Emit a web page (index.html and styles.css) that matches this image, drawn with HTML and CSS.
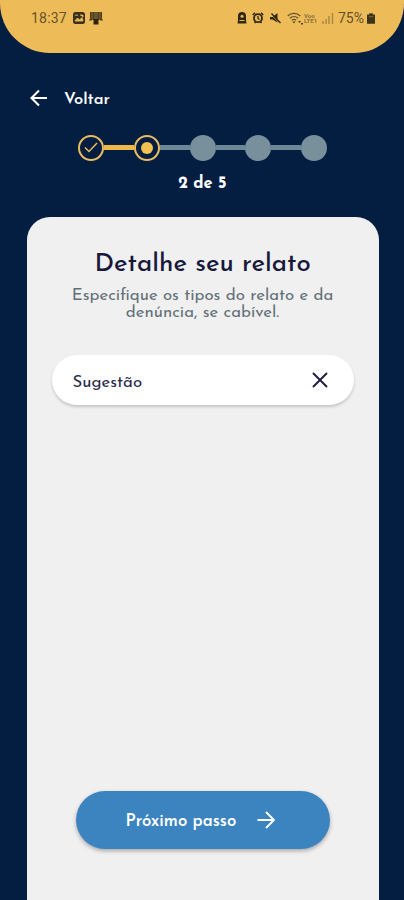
FILE: index.html
```html
<!DOCTYPE html>
<html lang="pt-BR">
<head>
<meta charset="utf-8">
<title>Detalhe seu relato</title>
<link rel="stylesheet" href="styles.css">
</head>
<body>
<header class="status">
  <div class="status-left">
    <span class="clock">18:37</span>
    <svg width="12" height="12" viewBox="0 0 12 12"><rect width="12" height="12" rx="2.5" fill="#3b3019"/><path d="M2 3.2h3M7 3h3v2M2 9l2.5-3 2 2L9 5.500l1 3.500z" fill="#e9b956" stroke="#e9b956" stroke-width=".9"/></svg>
    <svg width="14" height="14" viewBox="0 0 14 14"><path d="M2 1h10v8H2z" fill="#6b5529"/><path d="M1.500 1v8M12.500 1v8M4.500 1v8M9.500 1v8M0 9h3M11 9h3" stroke="#4d3e20" stroke-width="1.100"/><path d="M4.500 8h5v5.500h-5z" fill="#30240f"/></svg>
  </div>
  <div class="status-right">
    <svg class="i1" width="10" height="12" viewBox="0 0 10 12"><path d="M1 4a4 4 0 0 1 8 0v4l.5 3.500H.5L1 8z" fill="#30270f"/><circle cx="5" cy="4.300" r="1.500" fill="#e9b956"/><path d="M2.500 8.500h5" stroke="#e9b956"/></svg>
    <svg class="i2" width="12" height="12" viewBox="0 0 12 12"><path d="M.8 3 3 .9M11.200 3 9 .9M2.500 11l1-1M9.500 11l-1-1" stroke="#30270f" stroke-width="1.600"/><circle cx="6" cy="6.200" r="4" fill="#e9b956" stroke="#30270f" stroke-width="1.800"/><path d="M6 4v2.500l1.500 1" fill="none" stroke="#30270f" stroke-width="1.200"/></svg>
    <svg class="i3" width="12" height="12" viewBox="0 0 12 12"><path d="M1 5h2.500L8.500 1v9.500L3.500 7.500H1z" fill="#30270f"/><path d="m1 1.500 10 10" stroke="#e9b956" stroke-width="1"/><path d="m2.500 1.500 9 9.500" stroke="#30270f" stroke-width="1.400"/></svg>
    <svg class="i4" width="17" height="13" viewBox="0 0 17 13"><g fill="none" stroke="#65532d" stroke-width="1.200"><path d="M.7 4a9 9 0 0 1 12.600 0M2.800 6.200a6 6 0 0 1 8.400 0M4.800 8.300a3.300 3.300 0 0 1 4.400 0"/></g><path d="m5.500 9.500 1.500 2 1.500-2zM11 9l1.500 2L14 9zM14 11h2v1.500h-2z" fill="#4d3e20"/></svg>
    <span class="volte"><span>Voo</span><span>LTE1</span></span>
    <svg class="i5" width="12" height="12" viewBox="0 0 12 12"><path d="M1 9v3M4 7v5M7 4v8M10.500 1v11" stroke="#a98745" stroke-width="1.400"/></svg>
    <span class="battery">75%</span>
    <svg width="8" height="11" viewBox="0 0 9 12"><path d="M2.500 0h4v1.500H9V12H0V1.500h2.500z" fill="#3d321a"/><path d="M2 4h5" stroke="#8b713a"/></svg>
  </div>
</header>

<nav class="back">
  <svg width="18" height="18" viewBox="0 0 18 18"><path d="M17 9H1.500M9 1.500 1.500 9 9 16.500" fill="none" stroke="#fff" stroke-width="2.100"/></svg>
  <span class="back-label">Voltar</span>
</nav>

<div class="steps">
  <span class="dot ring"><svg width="14" height="11" viewBox="0 0 14 11"><path d="m1 5.500 4 4L13 1" fill="none" stroke="#e9bd62" stroke-width="1.500"/></svg></span>
  <span class="line active"></span>
  <span class="dot ring"><span class="core"></span></span>
  <span class="line"></span>
  <span class="dot"></span>
  <span class="line"></span>
  <span class="dot"></span>
  <span class="line"></span>
  <span class="dot"></span>
</div>
<p class="count">2 de 5</p>

<main class="card">
  <h1>Detalhe seu relato</h1>
  <p class="hint">Especifique os tipos do relato e da<br>denúncia, se cabível.</p>
  <div class="field">
    <span class="field-label">Sugestão</span>
    <svg width="16" height="16" viewBox="0 0 16 16"><path d="m1 1 14 14M15 1 1 15" stroke="#1c1d3d" stroke-width="1.900"/></svg>
  </div>
  <button class="next">
    <span class="next-label">Próximo passo</span>
    <svg width="18" height="18" viewBox="0 0 18 18"><path d="M.5 9H16.500M9 1l8 8-8 8" fill="none" stroke="#fff" stroke-width="1.900"/></svg>
  </button>
</main>
</body>
</html>
```
FILE: styles.css
```css
* { box-sizing: border-box; }
body {
  margin: 0;
  height: 900px;
  overflow: hidden;
  display: flex;
  flex-direction: column;
  background: #041e42;
  font-family: "Josefin Sans", Lato, sans-serif;
  color: #fff;
}
svg { display: block; flex: none; }
.status {
  height: 53px;
  flex: none;
  padding: 8px 29px 0 31px;
  display: flex;
  justify-content: space-between;
  background: #edbc58;
  border-radius: 0 0 50px 50px;
  font-family: Roboto, sans-serif;
  font-size: 14px;
  line-height: 20px;
  color: #66522a;
}
.status-left, .status-right { display: flex; align-items: center; height: 20px; }
.clock { width: 42px; letter-spacing: .2px; }
.status-left svg + svg { margin-left: 4px; }
.i1 { margin-right: 5px; }
.i2 { margin-right: 5px; }
.i3 { margin-right: 6px; }
.volte {
  display: flex;
  flex-direction: column;
  width: 15px;
  margin-right: 3px;
  font-size: 6px;
  line-height: 5.500px;
  font-weight: 700;
  color: #8b7040;
}
.i5 { margin-right: 4px; }
.battery { width: 29px; }
.back {
  display: flex;
  align-items: center;
  height: 24px;
  margin: 33px 0 0 30px;
  gap: 16px;
  padding-bottom: 1px;
}
.back-label { font-size: 16.5px; font-weight: 600; line-height: 24px; padding-top: 5px; }
.steps {
  display: flex;
  align-items: center;
  height: 27px;
  margin: 24px 77px 0 78px;
}
.dot {
  width: 26px;
  height: 26px;
  flex: none;
  border-radius: 50%;
  background: #78909c;
  display: flex;
  align-items: center;
  justify-content: center;
}
.ring { background: transparent; border: 2px solid #e9bd62; }
.core { width: 12px; height: 12px; border-radius: 50%; background: #f3c052; }
.line { flex: 1; height: 5px; background: #6c8797; }
.line.active { background: #edb949; }
.count { margin: 11px 0 0; padding-left: 1px; text-align: center; font-size: 16.5px; font-weight: 700; line-height: 24px; }
.card {
  flex: 1;
  margin: 21px 25.500px 0 26.500px;
  padding: 32px 25px 0;
  border-radius: 23px 23px 0 0;
  background: #f0f0f0;
  display: flex;
  flex-direction: column;
  align-items: center;
}
h1 { margin: 0; font-size: 25.8px; line-height: 32px; font-weight: 500; color: #17183b; white-space: nowrap; }
.hint { margin: 6px 0 0; text-align: center; font-size: 16.8px; line-height: 17px; color: #637078; white-space: nowrap; }
.field {
  align-self: stretch;
  height: 50px;
  margin-top: 34px;
  padding: 0 26px 0 21px;
  display: flex;
  align-items: center;
  justify-content: space-between;
  border-radius: 25px;
  background: #fff;
  box-shadow: 0 2px 3px rgba(0, 0, 0, .18);
}
.field-label { font-size: 16.8px; color: #292a4b; padding-top: 4px; }
.next {
  width: 254px;
  height: 58px;
  margin: 386px 0 0;
  padding: 0 55px 0 50px;
  display: flex;
  align-items: center;
  justify-content: space-between;
  border: 0;
  border-radius: 29px;
  background: #3c84c0;
  color: #fff;
  font: 600 16.8px "Josefin Sans", Lato, sans-serif;
  box-shadow: 0 2px 4px rgba(0, 0, 0, .3);
}
.next-label { padding-top: 3px; }
```
